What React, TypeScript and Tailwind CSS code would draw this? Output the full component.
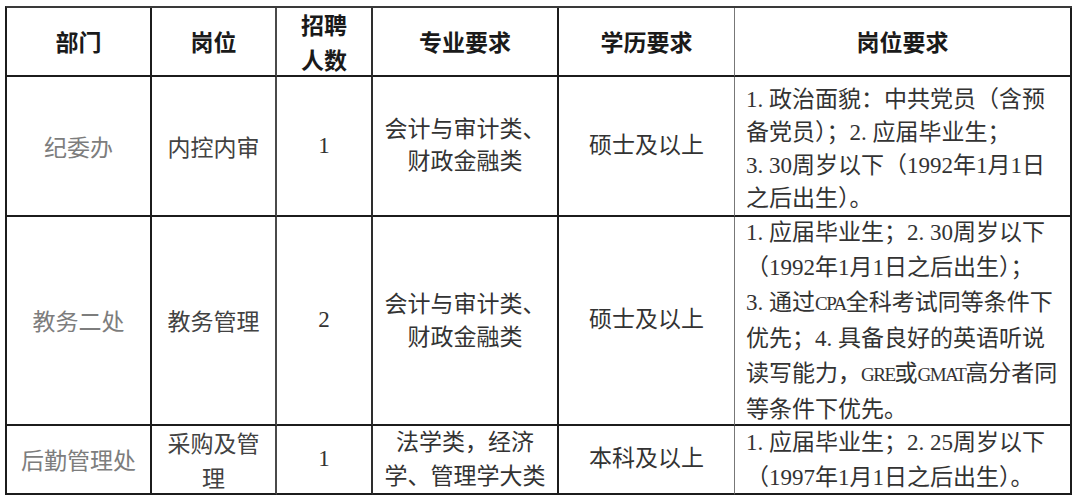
const song = "font-['Liberation_Serif','Noto_Sans_CJK_SC',serif]";
const sans = "font-['Noto_Sans_CJK_SC','Noto_Sans',sans-serif]";

// right border of each column, the lines are not all the same weight
const colLine = [
  "border-r-2 border-r-[#1c1c1c]",
  "border-r-2 border-r-[#4a4a4a]",
  "border-r-2 border-r-[#2e2e2e]",
  "border-r-2 border-r-[#1c1c1c]",
  "border-r border-r-[#777777]",
  "border-r-2 border-r-[#1c1c1c]",
];

type Cell = {
  lines: string[];
  cls: string;
  left?: boolean;
};

const headers: Cell[] = [
  { lines: ["部门"], cls: "" },
  { lines: ["岗位"], cls: "" },
  { lines: ["招聘", "人数"], cls: "leading-[35px]" },
  { lines: ["专业要求"], cls: "" },
  { lines: ["学历要求"], cls: "" },
  { lines: ["岗位要求"], cls: "" },
];

const rows: Cell[][] = [
  [
    { lines: ["纪委办"], cls: `${sans} text-[#7d7d7d]` },
    { lines: ["内控内审"], cls: `${sans} text-[#424242]` },
    { lines: ["1"], cls: `${song} text-[#333]` },
    { lines: ["会计与审计类、", "财政金融类"], cls: `${song} text-[#333] leading-[32px]` },
    { lines: ["硕士及以上"], cls: `${song} text-[#333]` },
    {
      lines: [
        "1. 政治面貌：中共党员（含预",
        "备党员）；2. 应届毕业生；",
        "3. 30周岁以下（1992年1月1日",
        "之后出生）。",
      ],
      cls: `${song} text-[#333] leading-[33px] pt-[5px]`,
      left: true,
    },
  ],
  [
    { lines: ["教务二处"], cls: `${sans} text-[#7d7d7d]` },
    { lines: ["教务管理"], cls: `${sans} text-[#424242]` },
    { lines: ["2"], cls: `${song} text-[#333]` },
    { lines: ["会计与审计类、", "财政金融类"], cls: `${song} text-[#333] leading-[33px]` },
    { lines: ["硕士及以上"], cls: `${song} text-[#333]` },
    {
      lines: [
        "1. 应届毕业生；2. 30周岁以下",
        "（1992年1月1日之后出生）；",
        "3. 通过CPA全科考试同等条件下",
        "优先；4. 具备良好的英语听说",
        "读写能力，GRE或GMAT高分者同",
        "等条件下优先。",
      ],
      cls: `${song} text-[#333] leading-[35px]`,
      left: true,
    },
  ],
  [
    { lines: ["后勤管理处"], cls: `${sans} text-[#7d7d7d]` },
    { lines: ["采购及管", "理"], cls: `${sans} text-[#424242] leading-[35px]` },
    { lines: ["1"], cls: `${song} text-[#333]` },
    { lines: ["法学类，经济", "学、管理学大类"], cls: `${song} text-[#333] leading-[34px]` },
    { lines: ["本科及以上"], cls: `${song} text-[#333]` },
    {
      lines: ["1. 应届毕业生；2. 25周岁以下", "（1997年1月1日之后出生）。"],
      cls: `${song} text-[#333] leading-[35px]`,
      left: true,
    },
  ],
];

// Latin capitals are narrower in the original Song face
function renderLine(text: string) {
  const parts = text.split(/(CPA|GRE|GMAT)/);
  return parts.map((p, i) =>
    p === "CPA" || p === "GRE" || p === "GMAT" ? (
      <span key={i} className="tracking-[-1.5px] text-[19px]">
        {p}
      </span>
    ) : (
      <span key={i}>{p}</span>
    )
  );
}

function TableCell({ cell, col }: { cell: Cell; col: number }) {
  return (
    <div
      className={`flex items-center overflow-visible border-b-2 border-b-[#1c1c1c] ${colLine[col]} ${
        cell.left ? "justify-start pl-[11px] text-left" : "justify-center text-center"
      }`}
    >
      <div className={cell.cls}>
        {cell.lines.map((l, i) => (
          <div key={i} className="whitespace-nowrap">
            {renderLine(l)}
          </div>
        ))}
      </div>
    </div>
  );
}

export default function App() {
  return (
    <div className="w-[1080px] h-[500px] bg-white pt-[6px] pl-[5px] text-[23px]">
      <div className="grid w-[1067px] grid-cols-[145px_125px_96px_186px_176px_337px] grid-rows-[69px_140px_209px_69px] border-t-2 border-t-[#3a3a3a] border-l-2 border-l-[#1c1c1c]">
        {headers.map((h, i) => (
          <TableCell
            key={i}
            col={i}
            cell={{ ...h, cls: `${sans} font-bold text-[#1a1a1a] ${h.cls}` }}
          />
        ))}
        {rows.map((r, ri) =>
          r.map((c, ci) => <TableCell key={`${ri}-${ci}`} col={ci} cell={c} />)
        )}
      </div>
    </div>
  );
}
